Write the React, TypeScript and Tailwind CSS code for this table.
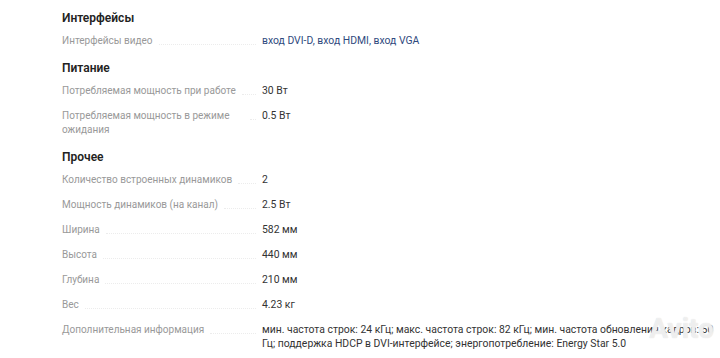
import React from 'react';

type Row = { label: string; value: string; link?: boolean };
type Section = { title: string; rows: Row[] };

const sections: Section[] = [
  {
    title: 'Интерфейсы',
    rows: [{ label: 'Интерфейсы видео', value: 'вход DVI-D, вход HDMI, вход VGA', link: true }],
  },
  {
    title: 'Питание',
    rows: [
      { label: 'Потребляемая мощность при работе', value: '30 Вт' },
      { label: 'Потребляемая мощность в режиме ожидания', value: '0.5 Вт' },
    ],
  },
  {
    title: 'Прочее',
    rows: [
      { label: 'Количество встроенных динамиков', value: '2' },
      { label: 'Мощность динамиков (на канал)', value: '2.5 Вт' },
      { label: 'Ширина', value: '582 мм' },
      { label: 'Высота', value: '440 мм' },
      { label: 'Глубина', value: '210 мм' },
      { label: 'Вес', value: '4.23 кг' },
      {
        label: 'Дополнительная информация',
        value:
          'мин. частота строк: 24 кГц; макс. частота строк: 82 кГц; мин. частота обновления кадров: 50 Гц; поддержка HDCP в DVI-интерфейсе; энергопотребление: Energy Star 5.0',
      },
    ],
  },
];

const SpecRow: React.FC<{ row: Row }> = ({ row }) => (
  <div className="flex pt-[5px] pb-[6px] leading-[14px]">
    <div className="w-[200px] shrink-0 flex items-start pr-[6px]">
      <span className="text-[10px] text-[#999999] max-w-[182px]">{row.label}</span>
      <span className="flex-1 min-w-[4px] ml-[6px] mt-[10px] border-b border-dotted border-[#ececec]" />
    </div>
    <div className={`flex-1 text-[10.4px] ${row.link ? 'text-[#2f4a7e]' : 'text-[#333333]'}`}>{row.value}</div>
  </div>
);

export default function App() {
  return (
    <div className="w-[720px] h-[358px] bg-white overflow-hidden relative" style={{ fontFamily: 'Roboto, "Noto Sans", sans-serif' }}>
      <div className="pl-[62px] pr-[2px] pt-[8px]">
        {sections.map((s, i) => (
          <div key={s.title} className={i > 0 ? 'mt-[4px]' : ''}>
            <div className="h-[21px] leading-[20px] text-[12px] font-semibold text-[#222222]">{s.title}</div>
            {s.rows.map((r) => (
              <SpecRow key={r.label} row={r} />
            ))}
          </div>
        ))}
      </div>
      <div className="absolute right-[6px] bottom-[8px] text-[28px] font-bold text-white/60 select-none" style={{ textShadow: '0 0 1px #d6d6d6' }}>
        Avito
      </div>
    </div>
  );
}
